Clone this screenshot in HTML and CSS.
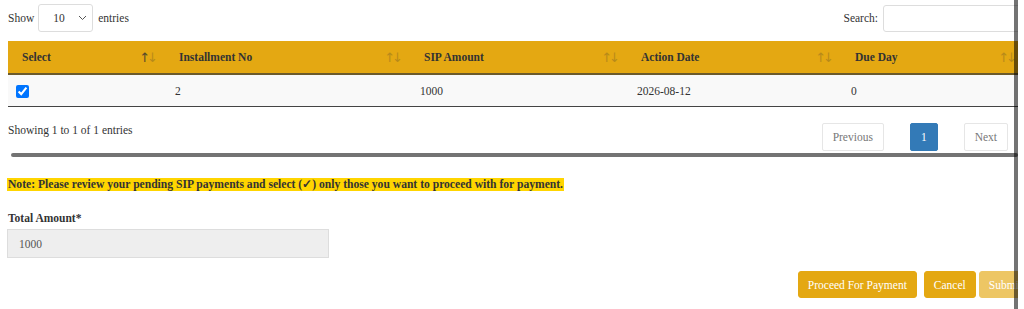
FILE: index.html
```html
<!DOCTYPE html>
<html>
<head>
    <title>Pending SIP Payments</title>
    <meta charset="UTF-8">
    <link rel="stylesheet" href="styles.css">
</head>
<body>
    <div class="frame">
        <div class="content">
            <div class="dt-wrapper">
                <div class="top-bar">
                    <label class="length">Show
                        <span class="select-box">
                            <select>
                                <option>10</option>
                                <option>25</option>
                                <option>50</option>
                            </select>
                            <svg class="chevron" width="9" height="6" viewBox="0 0 9 6"><path d="M1 1l3.5 3.5L8 1" fill="none" stroke="#555" stroke-width="1"/></svg>
                        </span>
                        entries</label>
                    <label class="search">Search: <input type="text"></label>
                </div>

                <table class="sip-table">
                    <thead>
                        <tr>
                            <th class="col-select"><div class="th-inner"><span>Select</span><span class="sort asc"><b>↑</b><i>↓</i></span></div></th>
                            <th class="col-inst"><div class="th-inner"><span>Installment No</span><span class="sort"><i>↑</i><i>↓</i></span></div></th>
                            <th class="col-amount"><div class="th-inner"><span>SIP Amount</span><span class="sort"><i>↑</i><i>↓</i></span></div></th>
                            <th class="col-date"><div class="th-inner"><span>Action Date</span><span class="sort"><i>↑</i><i>↓</i></span></div></th>
                            <th class="col-due"><div class="th-inner"><span>Due Day</span><span class="sort"><i>↑</i><i>↓</i></span></div></th>
                        </tr>
                    </thead>
                    <tbody>
                        <tr>
                            <td class="check"><input type="checkbox" checked></td>
                            <td>2</td>
                            <td>1000</td>
                            <td>2026-08-12</td>
                            <td>0</td>
                        </tr>
                    </tbody>
                </table>

                <div class="bottom-bar">
                    <div class="info">Showing 1 to 1 of 1 entries</div>
                    <div class="paging">
                        <span class="page-btn disabled">Previous</span>
                        <span class="page-btn current">1</span>
                        <span class="page-btn disabled">Next</span>
                    </div>
                </div>
            </div>

            <p class="note"><mark>Note: Please review your pending SIP payments and select (✓) only those you want to proceed with for payment.</mark></p>

            <div class="field">
                <label class="field-label">Total Amount*</label>
                <input type="text" class="amount" value="1000" readonly>
            </div>

            <div class="actions">
                <button type="button" class="btn">Proceed For Payment</button>
                <button type="button" class="btn btn-cancel">Cancel</button>
                <button type="button" class="btn btn-submit" disabled>Submit</button>
            </div>
        </div>

        <!-- overlay scrollbars -->
        <div class="hscroll"></div>
        <div class="vscroll"></div>
    </div>
</body>
</html>
```

FILE: styles.css
```css
body {
    margin: 0;
    font-family: "Liberation Serif", "Times New Roman", serif;
    font-size: 11.5px;
    color: #333;
    background: #fff;
}

.frame {
    position: relative;
    width: 1018px;
    height: 309px;
    overflow: hidden;
}

.content {
    width: 1040px;
    padding: 0 8px;
}

.dt-wrapper {
    width: 1016px;
}

/* top controls */
.top-bar {
    display: flex;
    justify-content: space-between;
    align-items: center;
    padding-top: 4px;
    height: 28px;
}

.length {
    display: flex;
    align-items: center;
    gap: 5px;
}

.select-box {
    position: relative;
    display: inline-block;
}

.select-box select {
    appearance: none;
    -webkit-appearance: none;
    width: 55px;
    height: 28px;
    padding: 0 0 0 14px;
    border: 1px solid #ddd;
    border-radius: 3px;
    background: #fff;
    font-family: inherit;
    font-size: 11.5px;
    color: #333;
    margin-left: -1px;
}

.select-box .chevron {
    position: absolute;
    right: 6px;
    top: 11px;
}

.search {
    display: flex;
    align-items: center;
    gap: 5px;
    margin-right: -8px;
}

.search input {
    width: 149px;
    height: 27px;
    box-sizing: border-box;
    border: 1px solid #ddd;
    border-radius: 3px;
}

/* table */
.sip-table {
    width: 1016px;
    margin-top: 9px;
    border-collapse: collapse;
    table-layout: fixed;
}

.col-select { width: 157px; }
.col-inst { width: 245px; }
.col-amount { width: 217px; }
.col-date { width: 214px; }
.col-due { width: 183px; }

.sip-table th {
    box-sizing: border-box;
    background-color: #e4a812;
    text-align: left;
    font-weight: bold;
    padding: 0 7px 0 14px;
    height: 33px;
    border-bottom: 2px solid #6b5a2c;
}

.th-inner {
    display: flex;
    justify-content: space-between;
    align-items: center;
}

.sort {
    font-family: "DejaVu Sans", sans-serif;
    font-size: 13px;
    font-weight: normal;
    letter-spacing: -3px;
    padding-right: 3px;
    color: #333;
}

.sort i {
    font-style: normal;
    opacity: 0.25;
}

.sort b {
    font-weight: normal;
    opacity: 0.8;
}

.sip-table td {
    background-color: #f9f9f9;
    height: 31px;
    padding: 0 10px;
    border-bottom: 1px solid #444;
}

.sip-table td.check {
    padding-left: 8px;
}

.check input {
    margin: 4px 0 0 0;
    width: 13px;
    height: 13px;
}

/* info and paging */
.bottom-bar {
    display: flex;
    justify-content: space-between;
    align-items: flex-start;
    padding-top: 16px;
    height: 28px;
}

.info {
    padding-top: 1px;
}

.paging {
    display: flex;
    gap: 26px;
    margin-right: 16px;
}

.page-btn {
    display: inline-block;
    height: 28px;
    line-height: 27px;
    box-sizing: border-box;
    padding: 0 10px;
    border: 1px solid #e6e6e6;
    border-radius: 2px;
    color: #777;
}

.page-btn.current {
    background-color: #337ab7;
    border-color: #337ab7;
    color: #fff;
}

/* note */
.note {
    margin: 26px 0 0 -1px;
    font-weight: bold;
    line-height: 15px;
    font-size: 11.6px;
}

.note mark {
    background-color: #ffd500;
    color: #333;
    padding: 0 1px;
}

/* total amount */
.field {
    margin-top: 20px;
}

.field-label {
    display: block;
    font-weight: bold;
    margin-bottom: 5px;
}

.amount {
    width: 322px;
    height: 29px;
    box-sizing: border-box;
    margin-left: -1px;
    padding: 0 11px;
    background-color: #eee;
    border: 1px solid #ddd;
    font-family: inherit;
    font-size: 11.5px;
    color: #555;
}

/* buttons */
.actions {
    display: flex;
    justify-content: flex-end;
    margin-top: 13px;
    margin-right: 16px;
}

.btn {
    height: 27px;
    padding: 0 9px;
    margin-left: 7px;
    background-color: #e4a812;
    color: #fff;
    border: 1px solid #e4a812;
    border-radius: 3px;
    font-family: inherit;
    font-size: 11.5px;
    cursor: pointer;
}

.btn-submit {
    margin-left: 3px;
    opacity: 0.65;
}

/* scrollbars drawn over the page */
.hscroll {
    position: absolute;
    left: 11px;
    right: 0;
    top: 153px;
    height: 4px;
    border-radius: 2px;
    background-color: rgba(0, 0, 0, 0.55);
}

.vscroll {
    position: absolute;
    right: 0;
    top: 0;
    bottom: 0;
    width: 4px;
    background-color: rgba(0, 0, 0, 0.55);
}
```
